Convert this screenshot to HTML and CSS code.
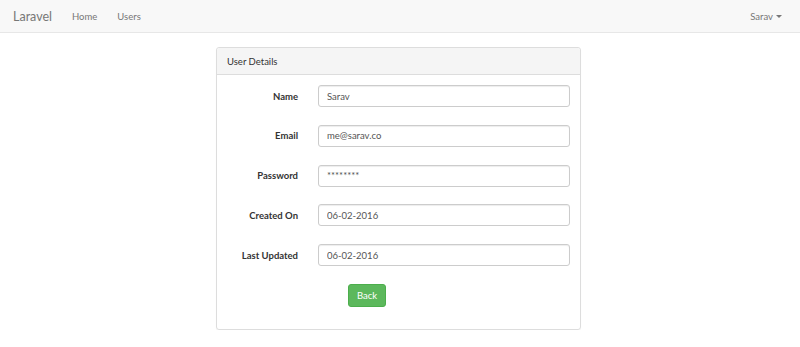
FILE: index.html
```html
<!DOCTYPE html>
<html lang="en">

<head>
    <meta charset="UTF-8">
    <meta name="viewport" content="width=device-width, initial-scale=1.0">
    <title>Laravel</title>
    <link rel="stylesheet" href="styles.css">
</head>

<body>
    <nav class="navbar">
        <a class="brand" href="#">Laravel</a>
        <ul class="nav-links">
            <li><a href="#">Home</a></li>
            <li><a href="#">Users</a></li>
        </ul>
        <div class="nav-user">Sarav <span class="caret"></span></div>
    </nav>

    <div class="container">
        <div class="panel">
            <div class="panel-heading">User Details</div>
            <div class="panel-body">
                <form class="form">
                    <div class="form-row">
                        <label class="form-label">Name</label>
                        <div class="form-field"><input class="form-input" type="text" value="Sarav"></div>
                    </div>
                    <div class="form-row">
                        <label class="form-label">Email</label>
                        <div class="form-field"><input class="form-input" type="text" value="me@sarav.co"></div>
                    </div>
                    <div class="form-row">
                        <label class="form-label">Password</label>
                        <div class="form-field"><input class="form-input" type="text" value="********"></div>
                    </div>
                    <div class="form-row">
                        <label class="form-label">Created On</label>
                        <div class="form-field"><input class="form-input" type="text" value="06-02-2016"></div>
                    </div>
                    <div class="form-row">
                        <label class="form-label">Last Updated</label>
                        <div class="form-field"><input class="form-input" type="text" value="06-02-2016"></div>
                    </div>
                    <div class="form-actions">
                        <button type="button" class="btn-success">Back</button>
                    </div>
                </form>
            </div>
        </div>
    </div>
</body>

</html>
```

FILE: styles.css
```css
* {
    margin: 0;
    padding: 0;
    box-sizing: border-box;
}

body {
    font-family: 'Lato', 'Noto Sans', sans-serif;
    font-size: 9.5px;
    color: #333;
    background-color: #fff;
}

a {
    text-decoration: none;
}

.navbar {
    display: flex;
    align-items: center;
    height: 33px;
    padding: 0 13px;
    background-color: #f8f8f8;
    border-bottom: 1px solid #e7e7e7;
}

.brand {
    font-size: 12.5px;
    color: #777;
    margin-right: 20px;
}

.nav-links {
    display: flex;
    list-style: none;
    gap: 20px;
    flex: 1;
}

.nav-links a {
    color: #777;
    font-size: 9.5px;
}

.nav-user {
    display: flex;
    align-items: center;
    color: #777;
    font-size: 9.5px;
    margin-right: 5px;
}

.caret {
    display: inline-block;
    width: 0;
    height: 0;
    margin-left: 3px;
    border-top: 3px solid #777;
    border-left: 3px solid transparent;
    border-right: 3px solid transparent;
}

.container {
    display: flex;
    justify-content: center;
    padding-top: 14px;
}

.panel {
    width: 365px;
    margin-right: 3px;
    border: 1px solid #ddd;
    border-radius: 3px;
    box-shadow: 0 1px 1px rgba(0, 0, 0, 0.05);
}

.panel-heading {
    height: 27px;
    display: flex;
    align-items: center;
    padding: 0 10px;
    background-color: #f5f5f5;
    border-bottom: 1px solid #ddd;
    border-radius: 3px 3px 0 0;
}

.panel-body {
    padding: 10px 10px 22px;
}

.form-row {
    display: flex;
    align-items: center;
    height: 22px;
    margin-bottom: 17.8px;
}

.form-label {
    width: 71px;
    text-align: right;
    font-weight: bold;
}

.form-field {
    flex: 1;
    padding-left: 20px;
}

.form-input {
    display: block;
    width: 100%;
    height: 22px;
    padding: 0 8px;
    font-family: inherit;
    font-size: 9.5px;
    color: #555;
    border: 1px solid #ccc;
    border-radius: 3px;
    box-shadow: inset 0 1px 1px rgba(0, 0, 0, 0.075);
}

.form-actions {
    padding-left: 121px;
}

.btn-success {
    width: 38px;
    height: 23px;
    font-family: inherit;
    font-size: 9.5px;
    color: #fff;
    background-color: #5cb85c;
    border: 1px solid #4cae4c;
    border-radius: 3px;
    cursor: pointer;
}
```
